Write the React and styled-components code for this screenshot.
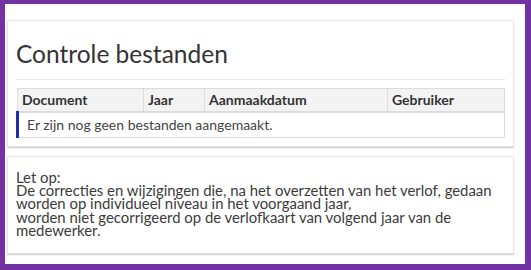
import styled, { createGlobalStyle } from 'styled-components'

const GlobalStyle = createGlobalStyle`
	html, body {
		margin: 0;
		padding: 0;
		background: #ffffff;
	}
	body {
		font-family: Lato, 'Noto Sans', 'Liberation Sans', sans-serif;
		color: #3b3b3b;
	}
`

const Frame = styled.div`
	box-sizing: border-box;
	width: 531px;
	height: 270px;
	border-style: solid;
	border-color: #7232a3;
	border-width: 4px 6px 6px 5px;
	background: #ffffff;
	padding: 16px 11px 0 2px;
	display: flex;
	flex-direction: column;
	gap: 9px;
`

const Panel = styled.section`
	background: #ffffff;
	border: 1px solid #e6e6e6;
	box-shadow: 0 1px 1px rgba(0, 0, 0, 0.18);
	padding: ${(p) => p.$pad};
`

const Title = styled.h1`
	margin: 0;
	font-size: 24.5px;
	font-weight: 400;
	line-height: 30px;
	color: #333333;
`

const Rule = styled.hr`
	margin: 10px 0 8px;
	border: 0;
	border-top: 1px solid #e8e8e8;
`

const Table = styled.table`
	width: 100%;
	table-layout: fixed;
	border-collapse: collapse;
	font-size: 14px;
	border: 1px solid #dcdcdc;
`

const Th = styled.th`
	box-sizing: border-box;
	background: #f3f3f3;
	border: 1px solid #dcdcdc;
	border-bottom-width: 2px;
	text-align: left;
	font-weight: 700;
	padding: 0 4px;
	height: 23px;
	color: #333333;
	width: ${(p) => p.$w || 'auto'};
`

const EmptyCell = styled.td`
	border-left: 3px solid #1a2fb0;
	padding: 0 8px;
	height: 24px;
	color: #444444;
`

const Note = styled.p`
	margin: 0;
	font-size: 14.9px;
	line-height: 13.4px;
	color: #3b3b3b;
`

export default function App() {
	return (
		<>
			<GlobalStyle />
			<Frame>
				<Panel $pad='18px 8px 8px'>
					<Title>Controle bestanden</Title>
					<Rule />
					<Table>
						<thead>
							<tr>
								<Th $w='126px'>Document</Th>
								<Th $w='61px'>Jaar</Th>
								<Th $w='183px'>Aanmaakdatum</Th>
								<Th>Gebruiker</Th>
							</tr>
						</thead>
						<tbody>
							<tr>
								<EmptyCell colSpan={4}>
									Er zijn nog geen bestanden aangemaakt.
								</EmptyCell>
							</tr>
						</tbody>
					</Table>
				</Panel>
				<Panel $pad='14px 8px 15px'>
					<Note>
						Let op:
						<br />
						De correcties en wijzigingen die, na het overzetten van
						het verlof, gedaan
						<br />
						worden op individueel niveau in het voorgaand jaar,
						<br />
						worden niet gecorrigeerd op de verlofkaart van volgend
						jaar van de
						<br />
						medewerker.
					</Note>
				</Panel>
			</Frame>
		</>
	)
}
